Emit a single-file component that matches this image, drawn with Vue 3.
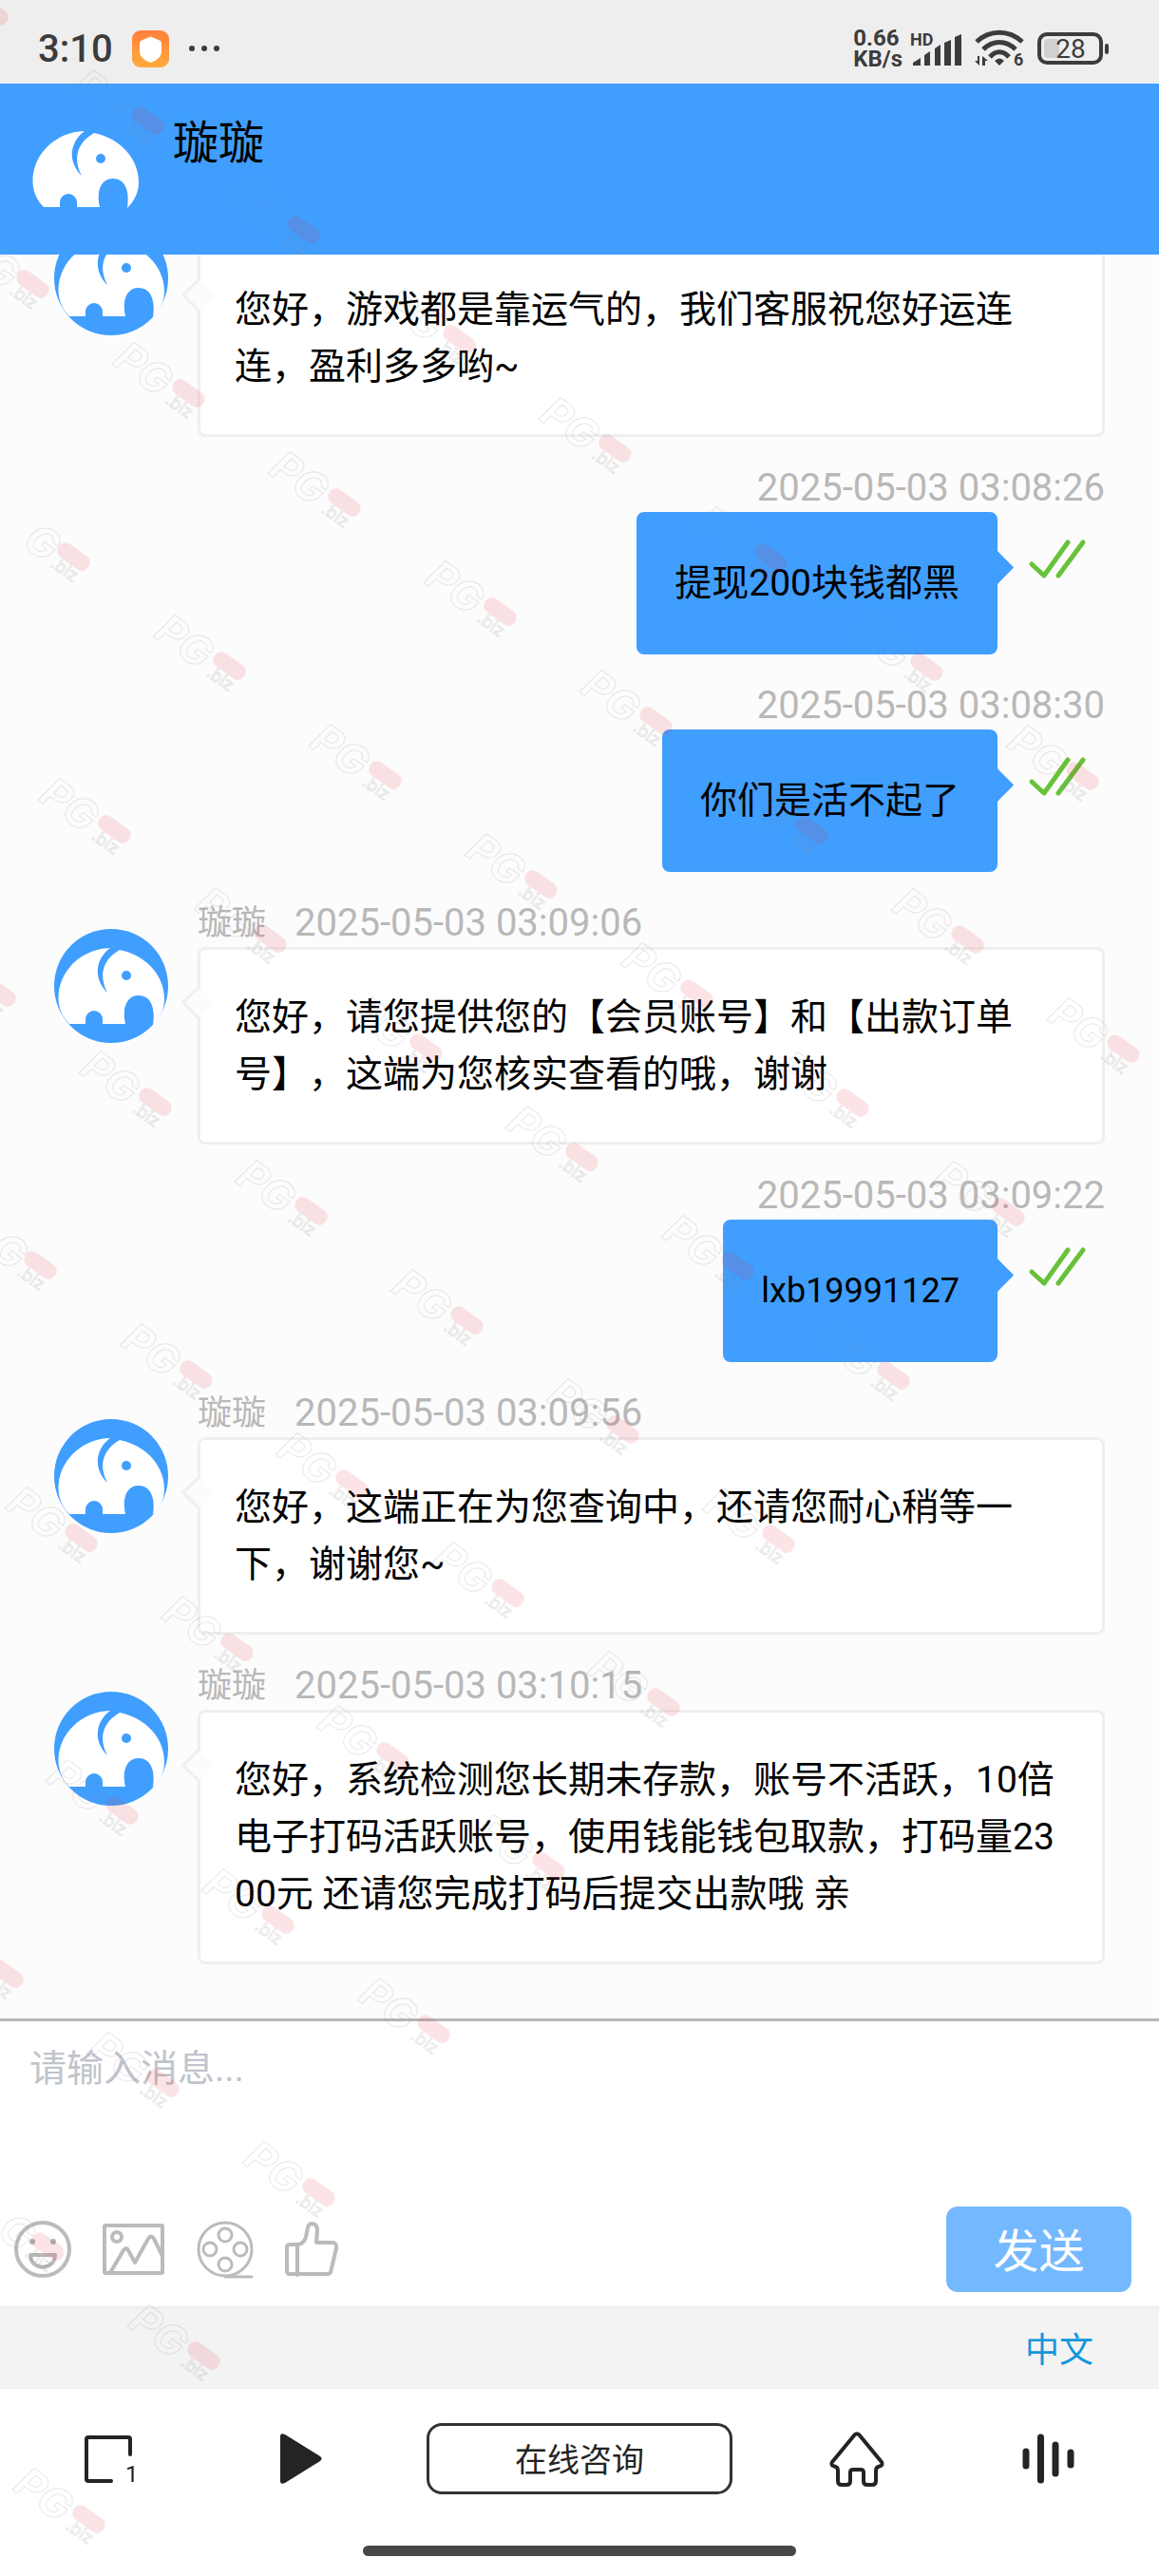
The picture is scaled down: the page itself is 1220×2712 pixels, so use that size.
<script setup>
    import { ref } from 'vue'

    const agent = '璇璇'
    const draft = ref('')

    const messages = [
        { id: 1, from: 'agent', time: '2025-05-03 03:08:01', text: '您好，游戏都是靠运气的，我们客服祝您好运连连，盈利多多哟~' },
        { id: 2, from: 'me', time: '2025-05-03 03:08:26', text: '提现200块钱都黑' },
        { id: 3, from: 'me', time: '2025-05-03 03:08:30', text: '你们是活不起了' },
        { id: 4, from: 'agent', time: '2025-05-03 03:09:06', text: '您好，请您提供您的【会员账号】和【出款订单号】，这端为您核实查看的哦，谢谢' },
        { id: 5, from: 'me', time: '2025-05-03 03:09:22', text: 'lxb19991127' },
        { id: 6, from: 'agent', time: '2025-05-03 03:09:56', text: '您好，这端正在为您查询中，还请您耐心稍等一下，谢谢您~' },
        { id: 7, from: 'agent', time: '2025-05-03 03:10:15', text: '您好，系统检测您长期未存款，账号不活跃，10倍电子打码活跃账号，使用钱能钱包取款，打码量2300元 还请您完成打码后提交出款哦 亲' },
    ]

    // Account names and other plain Latin text are set a little smaller
    const isLatin = (text) => /^[\x20-\x7e]+$/.test(text)

    const elephant =
        'M16 100C8 92 4 82 4.5 70C6 44 28 21 59 20C43 32 41 52 56 67C47 50 50 33 69 22C98 28 116 50 116 74C116 85 111 94 104 101C107 82 101 70 89 70C77 70 71 82 75 100H51V95A9 9 0 0 0 33 95V100Z'

    // Slanted grid of watermark positions, without the ones off the page
    const marks = []
    for (let row = 0; row <= 10; row++) {
        for (let col = -1; col <= 7; col++) {
            const x = 156 + col * 164 - row * 121
            const y = 128 + col * 115 + row * 172
            if (x > -20) marks.push({ x, y, label: x > 85 })
        }
    }
</script>

<template>
    <div class="page">
        <!-- System status bar -->
        <div class="status">
            <span class="clock">3:10</span>
            <svg class="app-badge" width="39" height="39" viewBox="0 0 39 39" aria-hidden="true">
                <defs>
                    <linearGradient id="badge" x1="0" y1="0" x2="0" y2="1">
                        <stop offset="0" stop-color="#ff7f3a" />
                        <stop offset="1" stop-color="#ffab3c" />
                    </linearGradient>
                </defs>
                <rect width="39" height="39" rx="9" fill="url(#badge)" />
                <path
                    d="M19.500 6.500L29 10.500Q31 11.500 31 13.500V22C31 28 26 31.500 19.500 34C13 31.500 8 28 8 22V13.500Q8 11.500 10 10.500Z"
                    fill="#fff"
                />
            </svg>
            <svg class="dots" width="34" height="8" viewBox="0 0 34 8" aria-hidden="true">
                <circle cx="4" cy="4" r="3" />
                <circle cx="17" cy="4" r="3" />
                <circle cx="30" cy="4" r="3" />
            </svg>
            <div class="status-right">
                <div class="speed"><span>0.66</span><span>KB/s</span></div>
                <svg width="54" height="38" viewBox="0 0 54 38" aria-hidden="true">
                    <text class="hd" x="0" y="16">HD</text>
                    <path d="M3 37V34L11 29V37ZM15 37V26L21 22V37ZM26 37V19L32 15V37ZM36 37V13L43 10V37ZM47 37V7L54 4V37Z" />
                </svg>
                <svg width="52" height="40" viewBox="0 0 52 40" aria-hidden="true">
                    <g class="waves">
                        <path d="M2 13C16 0 36 0 50 13" />
                        <path d="M9 21C19 11 33 11 43 21" />
                        <path d="M16 29C22 22 30 22 36 29" />
                    </g>
                    <path d="M21 33Q26 28 31 33L26 38Z" />
                    <path d="M5 28V38L0 33H3V28ZM8 38V28L14 33H11V38Z" />
                    <text class="wifi-gen" x="41" y="38">6</text>
                </svg>
                <svg width="76" height="34" viewBox="0 0 76 34" aria-hidden="true">
                    <rect x="2" y="2" width="65" height="30" rx="8" fill="none" stroke="#3c3c3c" stroke-width="4" />
                    <rect x="7" y="7" width="16" height="20" rx="4" fill="#d0d0d0" />
                    <rect x="71" y="12" width="4" height="11" rx="2" />
                    <text class="level" x="35" y="27" text-anchor="middle">28</text>
                </svg>
            </div>
        </div>

        <header class="header">
            <svg class="avatar" viewBox="0 0 120 120" aria-hidden="true">
                <circle cx="60" cy="60" r="60" fill="#409eff" />
                <path :d="elephant" fill="#fff" />
                <circle cx="76" cy="49" r="5" fill="#409eff" />
            </svg>
            <h1 class="title">{{ agent }}</h1>
        </header>

        <!-- Message list, pinned to the newest message -->
        <main class="chat">
            <article v-for="m in messages" :key="m.id" class="message" :class="m.from">
                <svg v-if="m.from === 'agent'" class="avatar" viewBox="0 0 120 120" aria-hidden="true">
                    <circle cx="60" cy="60" r="60" fill="#409eff" />
                    <path :d="elephant" fill="#fff" />
                    <circle cx="76" cy="49" r="5" fill="#409eff" />
                </svg>
                <div class="body">
                    <div class="meta">
                        <span v-if="m.from === 'agent'" class="name">{{ agent }}</span>
                        <time>{{ m.time }}</time>
                    </div>
                    <div class="line">
                        <p class="bubble" :class="{ latin: isLatin(m.text) }">{{ m.text }}</p>
                        <svg v-if="m.from === 'me'" class="read" viewBox="0 0 60 42" role="img" aria-label="已读">
                            <path d="M3 26L16 38L41 3M31 38L57 3" />
                        </svg>
                    </div>
                </div>
            </article>
        </main>

        <form class="composer" @submit.prevent>
            <textarea v-model="draft" class="input" placeholder="请输入消息..." aria-label="消息"></textarea>
            <div class="tools">
                <button type="button" class="tool" aria-label="表情">
                    <svg width="60" height="60" viewBox="0 0 60 60">
                        <circle cx="30" cy="30" r="28" />
                        <circle class="dot" cx="19" cy="22" r="3" />
                        <circle class="dot" cx="41" cy="22" r="3" />
                        <path d="M17 36H43C43 53 17 53 17 36Z" />
                    </svg>
                </button>
                <button type="button" class="tool" aria-label="图片">
                    <svg width="65" height="54" viewBox="0 0 65 54">
                        <rect x="2" y="2" width="61" height="50" rx="1" />
                        <circle cx="15" cy="14" r="5" />
                        <path d="M9 50L22 28Q25 24 27 28L34 41L48 16Q51 11 54 16L63 34" />
                    </svg>
                </button>
                <button type="button" class="tool thin" aria-label="视频">
                    <svg width="61" height="61" viewBox="0 0 61 61">
                        <circle cx="31" cy="30" r="28" />
                        <circle cx="31" cy="15" r="7" />
                        <circle cx="15" cy="30" r="7" />
                        <circle cx="47" cy="30" r="7" />
                        <circle cx="31" cy="46" r="7" />
                        <path d="M31 59H59" />
                    </svg>
                </button>
                <button type="button" class="tool" aria-label="评价">
                    <svg width="56" height="58" viewBox="0 0 56 58">
                        <path
                            d="M13 24V56M5 24H14Q20 23 22 16L24 6Q25 2 29 2Q34 3 34 9L33 22H49Q55 22 54 28L48 53Q47 55 44 55H5Q2 55 2 52V27Q2 24 5 24"
                        />
                    </svg>
                </button>
                <button type="submit" class="send">发送</button>
            </div>
        </form>

        <div class="lang">
            <button type="button" class="lang-btn">中文</button>
        </div>

        <!-- Browser navigation -->
        <nav class="nav">
            <div class="nav-row">
                <div class="nav-side left">
                    <button type="button" aria-label="标签页">
                        <svg width="56" height="50" viewBox="0 0 56 50">
                            <path
                                d="M48 20V4Q48 2 46 2H4Q2 2 2 4V46Q2 48 4 48H28"
                                fill="none"
                                stroke="#242424"
                                stroke-width="4"
                                stroke-linecap="round"
                            />
                            <text class="tab-count" x="43" y="49">1</text>
                        </svg>
                    </button>
                    <button type="button" aria-label="前进">
                        <svg width="44" height="53" viewBox="0 0 44 53">
                            <path d="M0 3Q0-1 5 1L42 24Q45 26.500 42 29L5 52Q0 54 0 50Z" fill="#242424" />
                        </svg>
                    </button>
                </div>
                <button type="button" class="address">在线咨询</button>
                <div class="nav-side right">
                    <button type="button" aria-label="主页">
                        <svg width="58" height="58" viewBox="0 0 58 58">
                            <path
                                d="M26.500 3.500Q29 1 31.500 3.500L55 32Q57 35 53 36.500Q49 37 49 41V52Q49 56 45 56H40Q36 56 36 52V43Q36 40 33 40H25Q22 40 22 43V52Q22 56 18 56H13Q9 56 9 52V41Q9 37 5 36.500Q1 35 3 32Z"
                                fill="none"
                                stroke="#242424"
                                stroke-width="4"
                                stroke-linejoin="round"
                            />
                        </svg>
                    </button>
                    <button type="button" aria-label="语音">
                        <svg width="55" height="53" viewBox="0 0 55 53">
                            <path
                                d="M4 19V34M19.500 4V49M35 12V42M51 20V33"
                                fill="none"
                                stroke="#242424"
                                stroke-width="7"
                                stroke-linecap="round"
                            />
                        </svg>
                    </button>
                </div>
            </div>
            <div class="home-bar"></div>
        </nav>

        <svg class="watermark" aria-hidden="true">
            <g v-for="(p, i) in marks" :key="i" :transform="`translate(${p.x} ${p.y}) rotate(36)`">
                <text v-if="p.label" class="wm-pg" x="-85" y="22">PG</text>
                <text v-else class="wm-pg" x="-53" y="22">G</text>
                <rect x="-20" y="-9" width="38" height="17" rx="8" />
                <text class="wm-biz" x="-16" y="22">.biz</text>
            </g>
        </svg>
    </div>
</template>

<style>
    body {
        margin: 0;
    }
</style>

<style scoped>
    .page {
        position: relative;
        display: flex;
        flex-direction: column;
        height: 100vh;
        overflow: hidden;
        background: #fff;
        color: #000;
        font-family: Roboto, 'Noto Sans CJK SC', sans-serif;
        font-size: 39px;
        text-spacing-trim: space-all;
    }
    button {
        padding: 0;
        border: 0;
        background: none;
        font: inherit;
        cursor: pointer;
    }
    svg {
        display: block;
        flex-shrink: 0;
        overflow: visible;
    }

    .status {
        display: flex;
        align-items: center;
        flex-shrink: 0;
        height: 88px;
        padding: 14px 52px 0 40px;
        box-sizing: border-box;
        background: #eee;
        color: #3c3c3c;
        fill: #3c3c3c;
    }
    .clock {
        font-size: 40px;
        font-weight: 500;
    }
    .app-badge {
        margin-left: 20px;
    }
    .dots {
        margin-left: 20px;
    }
    .status-right {
        display: flex;
        align-items: center;
        gap: 14px;
        margin-left: auto;
    }
    .speed {
        display: flex;
        flex-direction: column;
        font-size: 24px;
        font-weight: 700;
        line-height: 22px;
        margin-right: -6px;
    }
    .hd {
        font-size: 18px;
        font-weight: 700;
    }
    .waves {
        fill: none;
        stroke: #3c3c3c;
        stroke-width: 5;
    }
    .wifi-gen {
        font-size: 18px;
        font-weight: 700;
    }
    .level {
        font-size: 28px;
    }

    .header {
        display: flex;
        align-items: flex-start;
        flex-shrink: 0;
        gap: 32px;
        height: 180px;
        padding: 30px;
        box-sizing: border-box;
        background: #409eff;
    }
    .avatar {
        width: 120px;
        height: 120px;
    }
    .title {
        margin: 0;
        font-size: 48px;
        font-weight: 400;
        line-height: 66px;
    }

    .chat {
        flex: 1 1 0;
        min-height: 0;
        display: flex;
        flex-direction: column;
        justify-content: flex-end;
        gap: 29px;
        padding: 0 57px 57px;
        overflow: hidden;
        background: #fcfcfc;
    }
    .message {
        display: flex;
        align-items: flex-start;
        gap: 31px;
        flex-shrink: 0;
    }
    .message .avatar {
        margin-top: 31px;
    }
    .body {
        flex: 1;
        min-width: 0;
    }
    .meta {
        display: flex;
        align-items: center;
        gap: 30px;
        height: 50px;
        color: #b8b8b8;
        font-size: 40px;
        line-height: 48px;
    }
    .name {
        font-size: 36px;
    }
    .line {
        display: flex;
        align-items: flex-start;
    }
    .bubble {
        position: relative;
        flex: 1;
        margin: 0;
        padding: 41px 36px;
        border: 3px solid #efefef;
        border-radius: 8px;
        background: #fff;
        line-height: 60px;
        word-break: break-all;
    }
    .bubble::before {
        content: '';
        position: absolute;
        top: 43px;
        left: -15px;
        width: 22px;
        height: 22px;
        border-left: 3px solid #efefef;
        border-bottom: 3px solid #efefef;
        background: #fcfcfc;
        transform: rotate(45deg);
    }
    .me .meta {
        justify-content: flex-end;
    }
    .me .line {
        justify-content: flex-end;
    }
    .me .bubble {
        flex: none;
        padding: 42px 37px;
        border-color: #409eff;
        background: #409eff;
    }
    .me .bubble::before {
        left: auto;
        right: -15px;
        border-color: #409eff;
        background: #409eff;
    }
    .latin {
        font-size: 36px;
    }
    .read {
        width: 60px;
        height: 42px;
        margin: 29px 20px 0 33px;
        fill: none;
        stroke: #67c23a;
        stroke-width: 5;
        stroke-linecap: round;
        stroke-linejoin: round;
    }

    .composer {
        flex-shrink: 0;
        border-top: 3px solid #b6b6b6;
        background: #fff;
    }
    .input {
        display: block;
        width: 100%;
        height: 195px;
        padding: 20px 31px;
        box-sizing: border-box;
        border: 0;
        outline: 0;
        resize: none;
        background: none;
        font: inherit;
        line-height: 60px;
    }
    .input::placeholder {
        color: #c0c4cc;
    }
    .tools {
        display: flex;
        align-items: center;
        gap: 33px;
        padding: 0 29px 15px 15px;
    }
    .tool {
        fill: none;
        stroke: #bbb;
        stroke-width: 4;
        stroke-linejoin: round;
        stroke-linecap: round;
    }
    .thin {
        stroke-width: 3;
    }
    .dot {
        fill: #aab5b5;
        stroke: none;
    }
    .send {
        width: 195px;
        height: 90px;
        margin-left: auto;
        padding-bottom: 4px;
        border-radius: 12px;
        background: #74b9ff;
        color: #fff;
        font-size: 48px;
    }

    .lang {
        display: flex;
        align-items: center;
        justify-content: flex-end;
        flex-shrink: 0;
        height: 87px;
        padding: 0 69px 4px 0;
        box-sizing: border-box;
        border-top: 3px solid #eee;
        background: #f3f3f3;
    }
    .lang-btn {
        color: #1296db;
        font-size: 36px;
    }

    .nav {
        flex-shrink: 0;
        padding: 36px 0 21px;
        background: #fff;
    }
    .nav-row {
        display: grid;
        grid-template-columns: 1fr 322px 1fr;
        align-items: center;
        margin-bottom: 54px;
    }
    .nav-side {
        display: flex;
        align-items: center;
        justify-content: space-between;
    }
    .left {
        padding: 0 110px 0 89px;
    }
    .right {
        padding: 0 89px 0 102px;
    }
    .tab-count {
        font-size: 24px;
        fill: #242424;
    }
    .address {
        height: 75px;
        padding-bottom: 3px;
        border: 3px solid #333;
        border-radius: 16px;
        color: #242424;
        font-size: 34px;
    }
    .home-bar {
        width: 456px;
        height: 11px;
        margin: 0 auto;
        border-radius: 6px;
        background: #474747;
    }

    .watermark {
        position: absolute;
        inset: 0;
        width: 100%;
        height: 100%;
        pointer-events: none;
    }
    .watermark rect {
        fill: #e8303c;
        opacity: 0.13;
    }
    .wm-pg {
        fill: none;
        stroke: #808080;
        stroke-opacity: 0.2;
        font-family: Inter, sans-serif;
        font-size: 44px;
        font-weight: 700;
        font-style: italic;
    }
    .wm-biz {
        fill: none;
        stroke: #808080;
        stroke-opacity: 0.2;
        font-family: Inter, sans-serif;
        font-size: 18px;
    }
</style>
